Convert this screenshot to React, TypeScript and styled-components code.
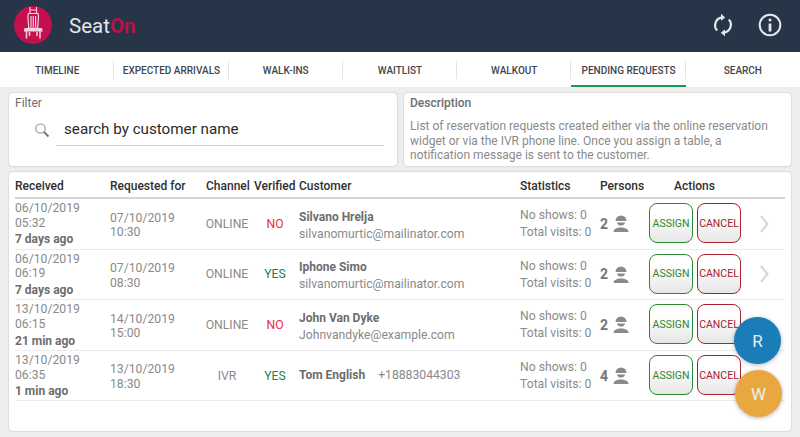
import React from "react";
import styled, { createGlobalStyle } from "styled-components";

const Global = createGlobalStyle`
  html, body { margin: 0; padding: 0; background: #eeeeee; }
  body { font-family: Roboto, "Liberation Sans", sans-serif; width: 800px; height: 437px; overflow: hidden; }
  * { box-sizing: border-box; }
`;

const Page = styled.div`
  position: relative;
  width: 800px;
  height: 437px;
  display: flex;
  flex-direction: column;
`;
const Header = styled.header`
  height: 52px;
  background: #263547;
  display: flex;
  align-items: center;
  padding: 0 18px 2px 14px;
`;
const Brand = styled.div`
  font-size: 20.5px;
  margin-left: 17px;
  padding-top: 2px;
  color: #e3e6ea;
  flex: 1;
  span { color: #b8114b; font-weight: 700; }
`;
const IconBtn = styled.button`
  background: none;
  border: none;
  padding: 0;
  margin-left: ${(p: { $gap: number }) => p.$gap}px;
  width: 24px;
  height: 24px;
  color: #e6e9ec;
  display: flex;
`;
const Tabs = styled.nav`
  height: 35px;
  background: #fff;
  display: grid;
  grid-template-columns: repeat(7, 1fr);
  align-items: stretch;
`;
const Tab = styled.div<{ $active?: boolean; $last?: boolean }>`
  position: relative;
  display: flex;
  align-items: center;
  justify-content: center;
  font-size: 10px;
  font-weight: 500;
  color: #3f464c;
  padding-top: 3px;
  border-bottom: 2px solid ${(p) => (p.$active ? "#1b9558" : "transparent")};
  &::after {
    content: "";
    display: ${(p) => (p.$last ? "none" : "block")};
    position: absolute;
    right: 0;
    top: 9px;
    height: 18px;
    width: 1px;
    background: #e2e4e4;
  }
`;
const Panels = styled.div`
  display: grid;
  grid-template-columns: 388px 387px;
  gap: 7px;
  padding: 6px 9px 0;
`;
const Panel = styled.section`
  height: 73px;
  background: #fff;
  border-radius: 4px;
  box-shadow: 0 0 2px rgba(0, 0, 0, 0.25);
  padding: 3px 6px;
`;
const PanelTitle = styled.div<{ $strong?: boolean }>`
  font-size: 12px;
  line-height: 15px;
  font-weight: ${(p) => (p.$strong ? 500 : 400)};
  color: #6e6e6e;
`;
const SearchRow = styled.div`
  display: flex;
  align-items: flex-start;
  margin-top: 7px;
  padding-left: 19px;
`;
const SearchIcon = styled.div`
  display: flex;
  margin-top: 4px;
`;
const SearchField = styled.div`
  flex: 1;
  margin-left: 6px;
  margin-right: 7px;
  height: 28px;
  border-bottom: 1px solid #d2d2d2;
  padding-left: 8px;
  font-size: 15.2px;
  line-height: 22px;
  color: #2b2b2b;
`;
const DescText = styled.p`
  margin: 8px 10px 0 0;
  font-size: 12px;
  line-height: 14.6px;
  color: #8a8a8a;
`;
const Card = styled.section`
  margin: 6px 9px 0;
  height: 259px;
  background: #fff;
  border-radius: 4px;
  box-shadow: 0 0 2px rgba(0, 0, 0, 0.25);
  padding: 0 6px;
`;
const cols = "95px 82px 62px 45px 221px 80px 47px 98px 1fr";
const HeadRow = styled.div`
  display: grid;
  grid-template-columns: ${cols};
  height: 27px;
  align-items: center;
  padding-top: 2px;
  border-bottom: 2px solid #d6d6d6;
  font-size: 12px;
  font-weight: 500;
  color: #2f2f2f;
`;
const HeadCell = styled.div<{ $pad?: string }>`
  padding: ${(p) => p.$pad || "0"};
  white-space: nowrap;
`;
const Row = styled.div`
  display: grid;
  grid-template-columns: ${cols};
  height: 50.6px;
  align-items: center;
  border-bottom: 1px solid #ececec;
  font-size: 12.2px;
  color: #8a8a8a;
`;
const Stack = styled.div<{ $top: number }>`
  line-height: 14.6px;
  padding-top: ${(p) => p.$top}px;
`;
const Ago = styled.div`
  font-weight: 700;
  font-size: 12px;
  color: #6d6d6d;
  line-height: 17px;
  margin-top: 1px;
`;
const Channel = styled.div`
  text-align: center;
  padding-left: 8px;
`;
const Verified = styled.div<{ $ok: boolean }>`
  text-align: center;
  color: ${(p) => (p.$ok ? "#16864c" : "#ef2b45")};
  padding-right: 3px;
`;
const Customer = styled.div<{ $top: number }>`
  padding-top: ${(p) => p.$top}px;
`;
const Name = styled.div`
  font-weight: 700;
  font-size: 12px;
  color: #6d6d6d;
  line-height: 17px;
`;
const Email = styled.div`
  line-height: 17px;
`;
const Phone = styled.span`
  margin-left: 13px;
  font-weight: 400;
  font-size: 12.2px;
  color: #8a8a8a;
`;
const Persons = styled.div`
  display: flex;
  align-items: center;
  gap: 5px;
  font-size: 14px;
  font-weight: 700;
  color: #757575;
`;
const Actions = styled.div`
  display: flex;
  gap: 4px;
  padding-left: 2px;
  margin-top: -1px;
`;
const ActionBtn = styled.button<{ $c: string }>`
  width: 44px;
  height: 40px;
  padding: 0;
  border-radius: 8px;
  border: 1.5px solid ${(p) => p.$c};
  color: ${(p) => p.$c};
  background: linear-gradient(#fff 30%, #e6e6e6);
  font-family: inherit;
  font-size: 10.5px;
  text-align: center;
`;
const Fab = styled.div<{ $bg: string; $top: number; $left: number }>`
  position: absolute;
  left: ${(p) => p.$left}px;
  top: ${(p) => p.$top}px;
  width: 47px;
  height: 47px;
  border-radius: 50%;
  background: ${(p) => p.$bg};
  color: #e9eef2;
  font-size: 17px;
  display: flex;
  align-items: center;
  justify-content: center;
  box-shadow: 0 1px 4px rgba(0, 0, 0, 0.3);
`;

const Logo = () => (
  <svg width="38" height="38" viewBox="0 0 38 38">
    <circle cx="19" cy="19" r="19" fill="#c4104f" />
    <g stroke="#f2d3df" fill="none" strokeWidth="1.2">
      <path d="M16 1v6M22.500 1v6M16 4h6.500" />
      <path d="M14.500 7.500h9.500l.5 3-.8 11.500h-9l-.8-11.500z" />
      <path d="M17 10v11M19.300 10v11M21.600 10v11" />
      <path d="M11 22.500h16.500l.5 2.500H10.500z" fill="#f2d3df" />
      <path d="M12.500 25v7.500M26 25v7.500M15.500 26v4M23 26v4" strokeWidth="1.5" />
    </g>
  </svg>
);
const Sync = () => (
  <svg width="24" height="24" viewBox="0 0 24 24" fill="none" stroke="currentColor" strokeWidth="2.2">
    <path d="M6.200 17.600A8 8 0 0 1 11 4.300" />
    <path d="M17.800 6.400A8 8 0 0 1 13 19.700" />
    <path d="M10 .8l4.200 3.600-4.200 3.400z" fill="currentColor" stroke="none" />
    <path d="M14 16.200l-4.200 3.500 4.200 3.500z" fill="currentColor" stroke="none" />
  </svg>
);
const Info = () => (
  <svg width="24" height="24" viewBox="0 0 24 24" fill="none" stroke="currentColor">
    <circle cx="12" cy="12" r="10.300" strokeWidth="2" />
    <circle cx="12" cy="7" r="1.500" fill="currentColor" stroke="none" />
    <path d="M12 10.500v8" strokeWidth="2.800" />
  </svg>
);
const Search = () => (
  <svg width="16" height="16" viewBox="0 0 16 16" fill="none">
    <circle cx="6.500" cy="6.500" r="4.700" stroke="#a3a3a3" strokeWidth="1.300" />
    <path d="M10 10l4.500 4.500" stroke="#777" strokeWidth="2" />
  </svg>
);
const Person = () => (
  <svg width="16" height="17" viewBox="0 0 16 17">
    <path d="M2.500 6a5.500 5.500 0 0 1 11 0z" fill="#8a8a8a" />
    <path d="M3.800 7.500h8.400A4.400 4.400 0 0 1 3.800 7.500z" fill="#8a8a8a" />
    <path d="M.5 17c0-3 3-4.500 7.500-4.500s7.500 1.500 7.500 4.500z" fill="#8a8a8a" />
  </svg>
);
const Chevron = () => (
  <svg width="9" height="18" viewBox="0 0 9 18" fill="none" style={{ marginLeft: 15, display: "block" }}>
    <path d="M1 1l6.500 8L1 17" stroke="#d8d8d8" strokeWidth="2.200" />
  </svg>
);

const rows = [
  { d: "06/10/2019", t: "05:32", ago: "7 days ago", rd: "07/10/2019", rt: "10:30", ch: "ONLINE", ok: false, name: "Silvano Hrelja", email: "silvanomurtic@mailinator.com", p: 2 },
  { d: "06/10/2019", t: "06:19", ago: "7 days ago", rd: "07/10/2019", rt: "08:30", ch: "ONLINE", ok: true, name: "Iphone Simo", email: "silvanomurtic@mailinator.com", p: 2 },
  { d: "13/10/2019", t: "06:15", ago: "21 min ago", rd: "14/10/2019", rt: "15:00", ch: "ONLINE", ok: false, name: "John Van Dyke", email: "Johnvandyke@example.com", p: 2 },
  { d: "13/10/2019", t: "06:35", ago: "1 min ago", rd: "13/10/2019", rt: "18:30", ch: "IVR", ok: true, name: "Tom English", phone: "+18883044303", p: 4 },
];
const tabs = ["TIMELINE", "EXPECTED ARRIVALS", "WALK-INS", "WAITLIST", "WALKOUT", "PENDING REQUESTS", "SEARCH"];

export default function App() {
  return (
    <Page>
      <Global />
      <Header>
        <Logo />
        <Brand>Seat<span>On</span></Brand>
        <IconBtn $gap={0}><Sync /></IconBtn>
        <IconBtn $gap={23}><Info /></IconBtn>
      </Header>
      <Tabs>
        {tabs.map((t, i) => (
          <Tab key={t} $active={i === 5} $last={i === 6}>{t}</Tab>
        ))}
      </Tabs>
      <Panels>
        <Panel>
          <PanelTitle>Filter</PanelTitle>
          <SearchRow>
            <SearchIcon><Search /></SearchIcon>
            <SearchField>search by customer name</SearchField>
          </SearchRow>
        </Panel>
        <Panel>
          <PanelTitle $strong>Description</PanelTitle>
          <DescText>
            List of reservation requests created either via the online reservation widget or via the IVR phone line. Once you assign a table, a notification message is sent to the customer.
          </DescText>
        </Panel>
      </Panels>
      <Card>
        <HeadRow>
          <HeadCell>Received</HeadCell>
          <HeadCell>Requested for</HeadCell>
          <HeadCell $pad="0 0 0 14px">Channel</HeadCell>
          <HeadCell>Verified</HeadCell>
          <HeadCell>Customer</HeadCell>
          <HeadCell>Statistics</HeadCell>
          <HeadCell>Persons</HeadCell>
          <HeadCell $pad="0 0 0 27px">Actions</HeadCell>
          <HeadCell />
        </HeadRow>
        {rows.map((r, i) => (
          <Row key={i}>
            <Stack $top={2}>
              <div>{r.d}</div>
              <div>{r.t}</div>
              <Ago>{r.ago}</Ago>
            </Stack>
            <Stack $top={3}>
              <div>{r.rd}</div>
              <div>{r.rt}</div>
            </Stack>
            <Channel>{r.ch}</Channel>
            <Verified $ok={r.ok}>{r.ok ? "YES" : "NO"}</Verified>
            <Customer $top={r.email ? 4 : 0}>
              {r.email ? (
                <>
                  <Name>{r.name}</Name>
                  <Email>{r.email}</Email>
                </>
              ) : (
                <Name>{r.name}<Phone>{r.phone}</Phone></Name>
              )}
            </Customer>
            <Customer $top={1}>
              <Email>No shows: 0</Email>
              <Email>Total visits: 0</Email>
            </Customer>
            <Persons>{r.p}<Person /></Persons>
            <Actions>
              <ActionBtn $c="#2b8a2f">ASSIGN</ActionBtn>
              <ActionBtn $c="#a8222f">CANCEL</ActionBtn>
            </Actions>
            {i < 2 ? <Chevron /> : <div />}
          </Row>
        ))}
      </Card>
      <Fab $bg="#1a7db8" $left={734} $top={317}>R</Fab>
      <Fab $bg="#e8a83f" $left={735} $top={370}>W</Fab>
    </Page>
  );
}
